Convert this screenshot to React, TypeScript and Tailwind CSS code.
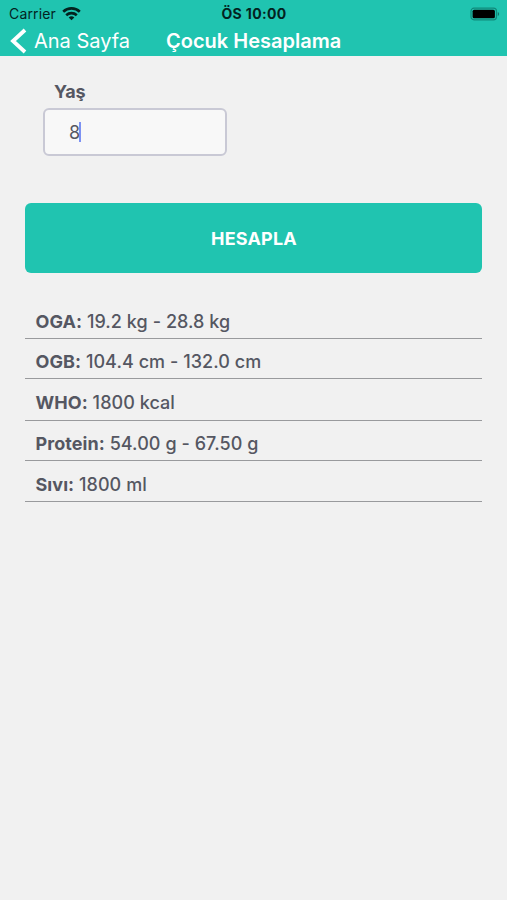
const results = [
  { label: "OGA:", value: "19.2 kg - 28.8 kg", spacing: "h-[41px] pt-[12px]" },
  { label: "OGB:", value: "104.4 cm - 132.0 cm", spacing: "h-[40px] pt-[11px]" },
  { label: "WHO:", value: "1800 kcal", spacing: "h-[42px] pt-[12px]" },
  { label: "Protein:", value: "54.00 g - 67.50 g", spacing: "h-[40px] pt-[11px]" },
  { label: "Sıvı:", value: "1800 ml", spacing: "h-[41px] pt-[12px]" },
];

function WifiIcon() {
  return (
    <svg width="19" height="14" viewBox="0 0 19 14" fill="none" stroke="#03231f" strokeWidth="2.6">
      <path d="M1.2 4.7C5.8.2 13.2.2 17.8 4.7" />
      <path d="M4.2 8.2c3-2.8 7.600-2.8 10.600 0" />
      <path d="M6.700 10.400c1.600-1.400 4-1.400 5.600 0L9.500 13.200z" fill="#03231f" stroke="none" />
    </svg>
  );
}

function BatteryIcon() {
  return (
    <svg width="30" height="14" viewBox="0 0 30 14" fill="none">
      <rect x="1" y="1.200" width="25.500" height="11.600" rx="3" stroke="#11897b" strokeWidth="1.200" />
      <rect x="2.600" y="2.800" width="22.300" height="8.400" rx="1.500" fill="#000" />
      <path d="M27.800 5v4c1.800-.8 1.800-3.200 0-4z" fill="#11766a" />
    </svg>
  );
}

function Header() {
  return (
    <header className="h-14 bg-[#20c4b0]">
      <div className="grid h-[27px] grid-cols-3 items-center pl-[8px] pr-[7px] text-[#03231f]">
        <div className="flex items-center gap-[6px] pl-px text-[14px]">
          <span className="w-[47px] tracking-[0.15px]">Carrier</span>
          <WifiIcon />
        </div>
        <span className="text-center text-[14px] font-bold tracking-[0.35px]">ÖS 10:00</span>
        <div className="flex justify-end">
          <BatteryIcon />
        </div>
      </div>
      <div className="flex h-[27px] items-center pl-[10px] text-white">
        <svg width="17" height="26" viewBox="0 0 17 26" fill="none" stroke="white" strokeWidth="3.8">
          <path d="M15 2 3 13l12 11" />
        </svg>
        <span className="ml-[7px] w-[132px] text-[20px] leading-7">Ana Sayfa</span>
        <h1 className="text-[20px] font-semibold leading-7">Çocuk Hesaplama</h1>
      </div>
    </header>
  );
}

export default function App() {
  return (
    <div className="min-h-[900px] w-full bg-[#f1f1f1] font-['Inter','Liberation_Sans',sans-serif] text-[#555762]">
      <Header />
      <main className="px-[25px] pt-[24px]">
        <div className="ml-[18px] w-[184px]">
          <label className="block h-[28px] pl-[11px] text-[18px] font-bold leading-[23px] tracking-[-0.2px]">Yaş</label>
          <div className="flex h-[48px] items-center rounded-[6px] border-2 border-[#c9c9d5] bg-[#f8f8f8] pl-[24px] text-[18px]">
            <span>8</span>
            <span className="-ml-px h-[20px] w-[2px] shrink-0 bg-[#7d92f3]" />
          </div>
        </div>
        <button className="mt-[47px] block h-[70px] w-full rounded-[6px] bg-[#20c4b0] pl-px text-[18px] font-bold tracking-[0.2px] text-white">
          HESAPLA
        </button>
        <div className="mt-[25px]">
          {results.map((row) => (
            <p key={row.label} className={`${row.spacing} border-b border-[#999a9d] pl-[10.5px] text-[18px] font-medium leading-[24px] tracking-[0.06px]`}>
              <span className="font-bold">{row.label}</span> {row.value}
            </p>
          ))}
        </div>
      </main>
    </div>
  );
}
